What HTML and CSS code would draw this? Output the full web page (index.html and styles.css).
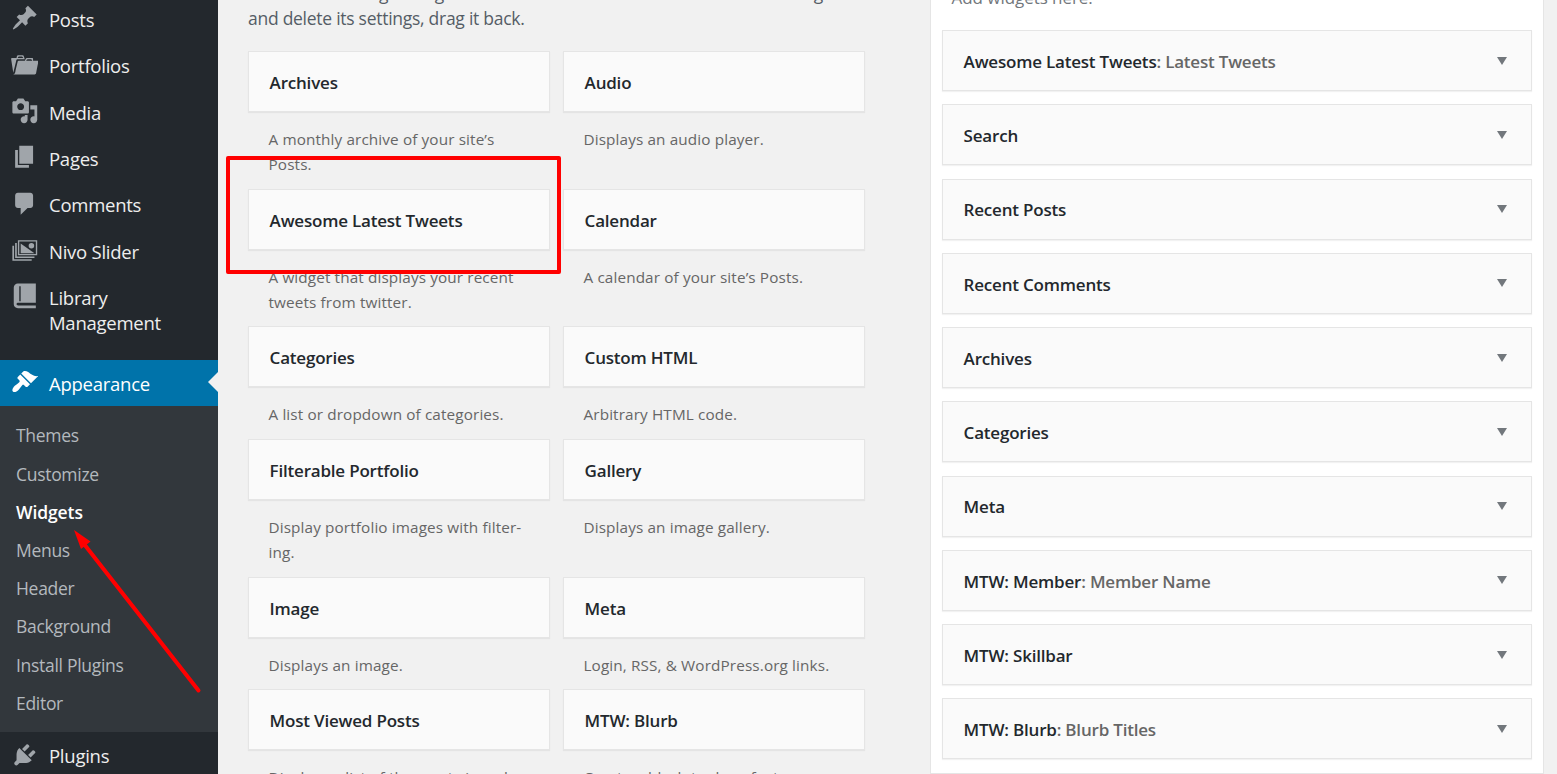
FILE: index.html
```html
<!DOCTYPE html>
<html lang="en">
<head>
<meta charset="utf-8">
<title>Widgets</title>
<link rel="stylesheet" href="styles.css">
</head>
<body>
<div class="screen">
  <nav class="sidebar">
    <a class="item"><svg class="icon" viewBox="0 0 20 20"><path d="M10.44 3.02l1.82-1.82 6.36 6.35-1.83 1.82c-1.05-.68-2.48-.57-3.41.36l-.75.75c-.92.93-1.04 2.35-.35 3.41l-1.83 1.82-2.41-2.41-2.8 2.79c-.42.42-3.38 2.71-3.8 2.29s1.86-3.39 2.28-3.81l2.79-2.79L4.1 9.36l1.83-1.82c1.05.69 2.48.57 3.4-.36l.75-.75c.93-.92 1.05-2.35.36-3.41z"/></svg><span>Posts</span></a>
    <a class="item"><svg class="icon" viewBox="0 0 20 20"><path d="M4 5H.78c-.37 0-.74.32-.69.84l1.56 9.99S3.5 8.47 3.86 6.7c.11-.53.61-.7.98-.7H10s-.7-2.08-.77-2.31C9.11 3.25 8.89 3 8.45 3H5.14c-.36 0-.7.23-.8.64C4.25 4.04 4 5 4 5zm4.88 0h-4s.42-1 .87-1h2.13c.48 0 1 1 1 1zM2.67 16.25c-.31.47-.76.75-1.26.75h15.73c.54 0 .92-.31 1.03-.83.44-2.19 1.68-8.44 1.68-8.44.07-.5-.3-.73-.62-.73H16V5.53c0-.16-.26-.53-.66-.53h-3.76c-.52 0-.87.58-.87.58L10 7H5.59c-.32 0-.63.19-.69.5 0 0-1.59 6.7-1.72 7.33-.07.37-.22.99-.51 1.42zM15.38 7H11s.58-1 1.13-1h2.29c.71 0 .96 1 .96 1z"/></svg><span>Portfolios</span></a>
    <a class="item"><svg class="icon" viewBox="0 0 20 20"><path d="M13 11V4c0-.55-.45-1-1-1h-1.67L9 1H5L3.67 3H2c-.55 0-1 .45-1 1v7c0 .55.45 1 1 1h10c.55 0 1-.45 1-1zM7 4.5c1.38 0 2.5 1.12 2.5 2.5S8.38 9.5 7 9.5 4.5 8.38 4.5 7 5.62 4.5 7 4.5zM14 6h5v10.5c0 1.38-1.12 2.5-2.5 2.5S14 17.88 14 16.5s1.12-2.5 2.5-2.5c.17 0 .34.02.5.05V9h-3V6zm-4 8.05V13h2v3.5c0 1.38-1.12 2.5-2.5 2.5S7 17.88 7 16.5 8.12 14 9.5 14c.17 0 .34.02.5.05z"/></svg><span>Media</span></a>
    <a class="item"><svg class="icon" viewBox="0 0 20 20"><path d="M6 15V2h10v13H6zm-1 1h8v2H3V5h2v11z"/></svg><span>Pages</span></a>
    <a class="item"><svg class="icon" viewBox="0 0 20 20"><path d="M5 2h9c1.1 0 2 .9 2 2v7c0 1.1-.9 2-2 2h-2l-5 5v-5H5c-1.1 0-2-.9-2-2V4c0-1.1.9-2 2-2z"/></svg><span>Comments</span></a>
    <a class="item"><svg class="icon" viewBox="0 0 20 20"><path fill-rule="evenodd" d="M5 3h14v11H5zM6 4v9h12V4zM3 5h1.2v9.8H17V16H3zM1 7h1.2v9.8H15V18H1z"/><path d="M7 5.5l10 7H7z"/><circle cx="14.8" cy="7" r="2"/></svg><span>Nivo Slider</span></a>
    <a class="item"><svg class="icon" viewBox="0 0 20 20"><path fill-rule="evenodd" d="M5 1h13v14H5.200c-.7 0-1.200.4-1.200 1s.5 1 1.200 1H18v2H5c-1.700 0-3-1.200-3-2.800V4c0-1.700 1.300-3 3-3zm1 2v11h1V3z"/></svg><span>Library<br>Management</span></a>
    <a class="item current"><svg class="icon" viewBox="0 0 20 20"><path d="M14.48 11.06L7.41 3.99l1.5-1.5c.5-.56 2.3-.47 3.51.32 1.21.8 1.43 1.28 2.91 2.1 1.18.64 2.45 1.26 4.45.85zm-.71.71L6.7 4.7 4.93 6.47c-.39.39-.39 1.02 0 1.41l1.06 1.06c.39.39.39 1.03 0 1.42-.6.6-1.43 1.11-2.21 1.69-.35.26-.7.53-1.01.84C1.43 14.23.4 16.08 1.4 17.07c.99 1 2.84-.03 4.18-1.36.31-.31.58-.66.85-1.02.57-.78 1.08-1.61 1.69-2.21.39-.39 1.02-.39 1.41 0l1.06 1.06c.39.39 1.02.39 1.41 0z"/></svg><span>Appearance</span></a>
    <div class="submenu">
      <a>Themes</a><a>Customize</a><a class="active">Widgets</a><a>Menus</a><a>Header</a><a>Background</a><a>Install Plugins</a><a>Editor</a>
    </div>
    <a class="item"><svg class="icon" viewBox="0 0 20 20"><path d="M13.11 4.36L9.87 7.6 8 5.73l3.24-3.24c.35-.34 1.05-.2 1.56.32.52.51.66 1.21.31 1.55zm-8 1.77l.91-1.12 9.01 9.01-1.19.84c-.71.71-2.63 1.16-3.82 1.16H6.14L4.9 17.26c-.59.59-1.54.59-2.12 0-.59-.58-.59-1.53 0-2.12l1.24-1.24v-3.88c0-1.13.4-3.19 1.09-3.89zm7.26 3.97l3.24-3.24c.34-.35 1.04-.21 1.55.31.52.51.66 1.21.31 1.55l-3.24 3.25z"/></svg><span>Plugins</span></a>
  </nav>

  <main class="available">
    <p class="intro">To activate a widget drag it to a sidebar or click on it. To deactivate a widget<br>and delete its settings, drag it back.</p>
    <div class="grid">
      <section><h4 class="widget">Archives</h4><p>A monthly archive of your site’s<br>Posts.</p></section>
      <section><h4 class="widget">Audio</h4><p>Displays an audio player.</p></section>
      <section><h4 class="widget">Awesome Latest Tweets</h4><p>A widget that displays your recent<br>tweets from twitter.</p></section>
      <section><h4 class="widget">Calendar</h4><p>A calendar of your site’s Posts.</p></section>
      <section><h4 class="widget">Categories</h4><p>A list or dropdown of categories.</p></section>
      <section><h4 class="widget">Custom HTML</h4><p>Arbitrary HTML code.</p></section>
      <section><h4 class="widget">Filterable Portfolio</h4><p>Display portfolio images with filter-<br>ing.</p></section>
      <section><h4 class="widget">Gallery</h4><p>Displays an image gallery.</p></section>
      <section><h4 class="widget">Image</h4><p>Displays an image.</p></section>
      <section><h4 class="widget">Meta</h4><p>Login, RSS, &amp; WordPress.org links.</p></section>
      <section><h4 class="widget">Most Viewed Posts</h4><p>Displays a list of the most viewed</p></section>
      <section><h4 class="widget">MTW: Blurb</h4><p>Create a blurb to draw featur</p></section>
    </div>
  </main>

  <aside class="panel">
    <p class="hint">Add widgets here.</p>
    <div class="stack">
      <h4 class="widget">Awesome Latest Tweets<em>: Latest Tweets</em></h4>
      <h4 class="widget">Search</h4>
      <h4 class="widget">Recent Posts</h4>
      <h4 class="widget">Recent Comments</h4>
      <h4 class="widget">Archives</h4>
      <h4 class="widget">Categories</h4>
      <h4 class="widget">Meta</h4>
      <h4 class="widget">MTW: Member<em>: Member Name</em></h4>
      <h4 class="widget">MTW: Skillbar</h4>
      <h4 class="widget">MTW: Blurb<em>: Blurb Titles</em></h4>
    </div>
  </aside>

  <div class="highlight"></div>
  <svg class="pointer" viewBox="0 0 140 180"><path d="M19 24L133.500 170.500" stroke="#f00" stroke-width="4" stroke-linecap="round"/><path d="M9 10l16.500 11.500-9.500 7.500z" fill="#f00"/></svg>
</div>
</body>
</html>
```
FILE: styles.css
```css
* { box-sizing: border-box; }
body { margin: 0; background: #f1f1f1; font-family: "Open Sans", "Noto Sans", sans-serif; }
p, h4 { margin: 0; }

.screen {
  position: relative;
  display: flex;
  align-items: flex-start;
  width: 1557px;
  height: 774px;
  overflow: hidden;
  white-space: nowrap;
}

.sidebar {
  width: 218px;
  height: 780px;
  flex: none;
  margin-top: -4px;
  background: #23282d;
}
.item {
  display: flex;
  padding: 11px 0 10.350px 10.600px;
  font-size: 18.500px;
  line-height: 25px;
  letter-spacing: -0.250px;
  color: #eee;
}
.icon { flex: none; width: 27.600px; height: 27.600px; margin: -2.600px 10.800px -3.400px 0; fill: #a0a5aa; }
.current { position: relative; margin-top: 14.500px; background: #0073aa; color: #fff; }
.current .icon { fill: #fff; }
.current::after {
  content: "";
  position: absolute;
  right: 0;
  top: 12px;
  border: 10.500px solid transparent;
  border-left: 0;
  border-right-color: #f1f1f1;
}
.submenu {
  display: flex;
  flex-direction: column;
  height: 326px;
  padding: 10.200px 16px 0;
  background: #32373c;
}
.submenu a { font-size: 17.500px; line-height: 38.200px; letter-spacing: -0.300px; color: #b4b9be; }
.submenu .active { font-weight: 600; letter-spacing: -0.100px; color: #fff; }

.available { flex: none; width: 617px; margin-left: 30px; margin-top: -19px; }
.intro { font-size: 17.500px; line-height: 25px; letter-spacing: -0.270px; color: #555d66; }
.grid { display: grid; grid-template-columns: 302px 302px; column-gap: 13px; margin-top: 20px; }
.grid p { padding: 14.900px 0 11.800px 20.500px; font-size: 15.300px; line-height: 25px; letter-spacing: 0.120px; color: #666; }

.widget {
  height: 61px;
  padding: 0 20.600px;
  border: 1px solid #e5e5e5;
  box-shadow: 0 1px 1px rgba(0, 0, 0, .05);
  background: #fafafa;
  color: #23282d;
  font-size: 17px;
  font-weight: 600;
  line-height: 61px;
  letter-spacing: -0.200px;
}
.widget em { font-style: normal; color: #666; }

.panel {
  flex: none;
  width: 614px;
  height: 784px;
  margin: -10px 0 0 65px;
  padding: 0 11px;
  border: 1px solid #e5e5e5;
  background: #fff;
}
.hint { height: 39px; padding-left: 9.500px; font-size: 17px; line-height: 14px; letter-spacing: -0.050px; color: #72777c; }
.stack { display: flex; flex-direction: column; gap: 13.250px; }
.stack .widget { display: flex; align-items: center; flex: none; padding-top: 1.500px; }
.stack .widget em { white-space: pre; }
.stack .widget::after {
  content: "";
  width: 0;
  margin: -1.500px 3px 0 auto;
  border: 5.500px solid transparent;
  border-top: 8.500px solid #72777c;
  border-bottom: 0;
}

.highlight {
  position: absolute;
  left: 226px;
  top: 156px;
  width: 335px;
  height: 118px;
  border: 4px solid #f00;
  border-radius: 2px;
}
.pointer { position: absolute; left: 65px; top: 520px; width: 140px; height: 180px; }
```
